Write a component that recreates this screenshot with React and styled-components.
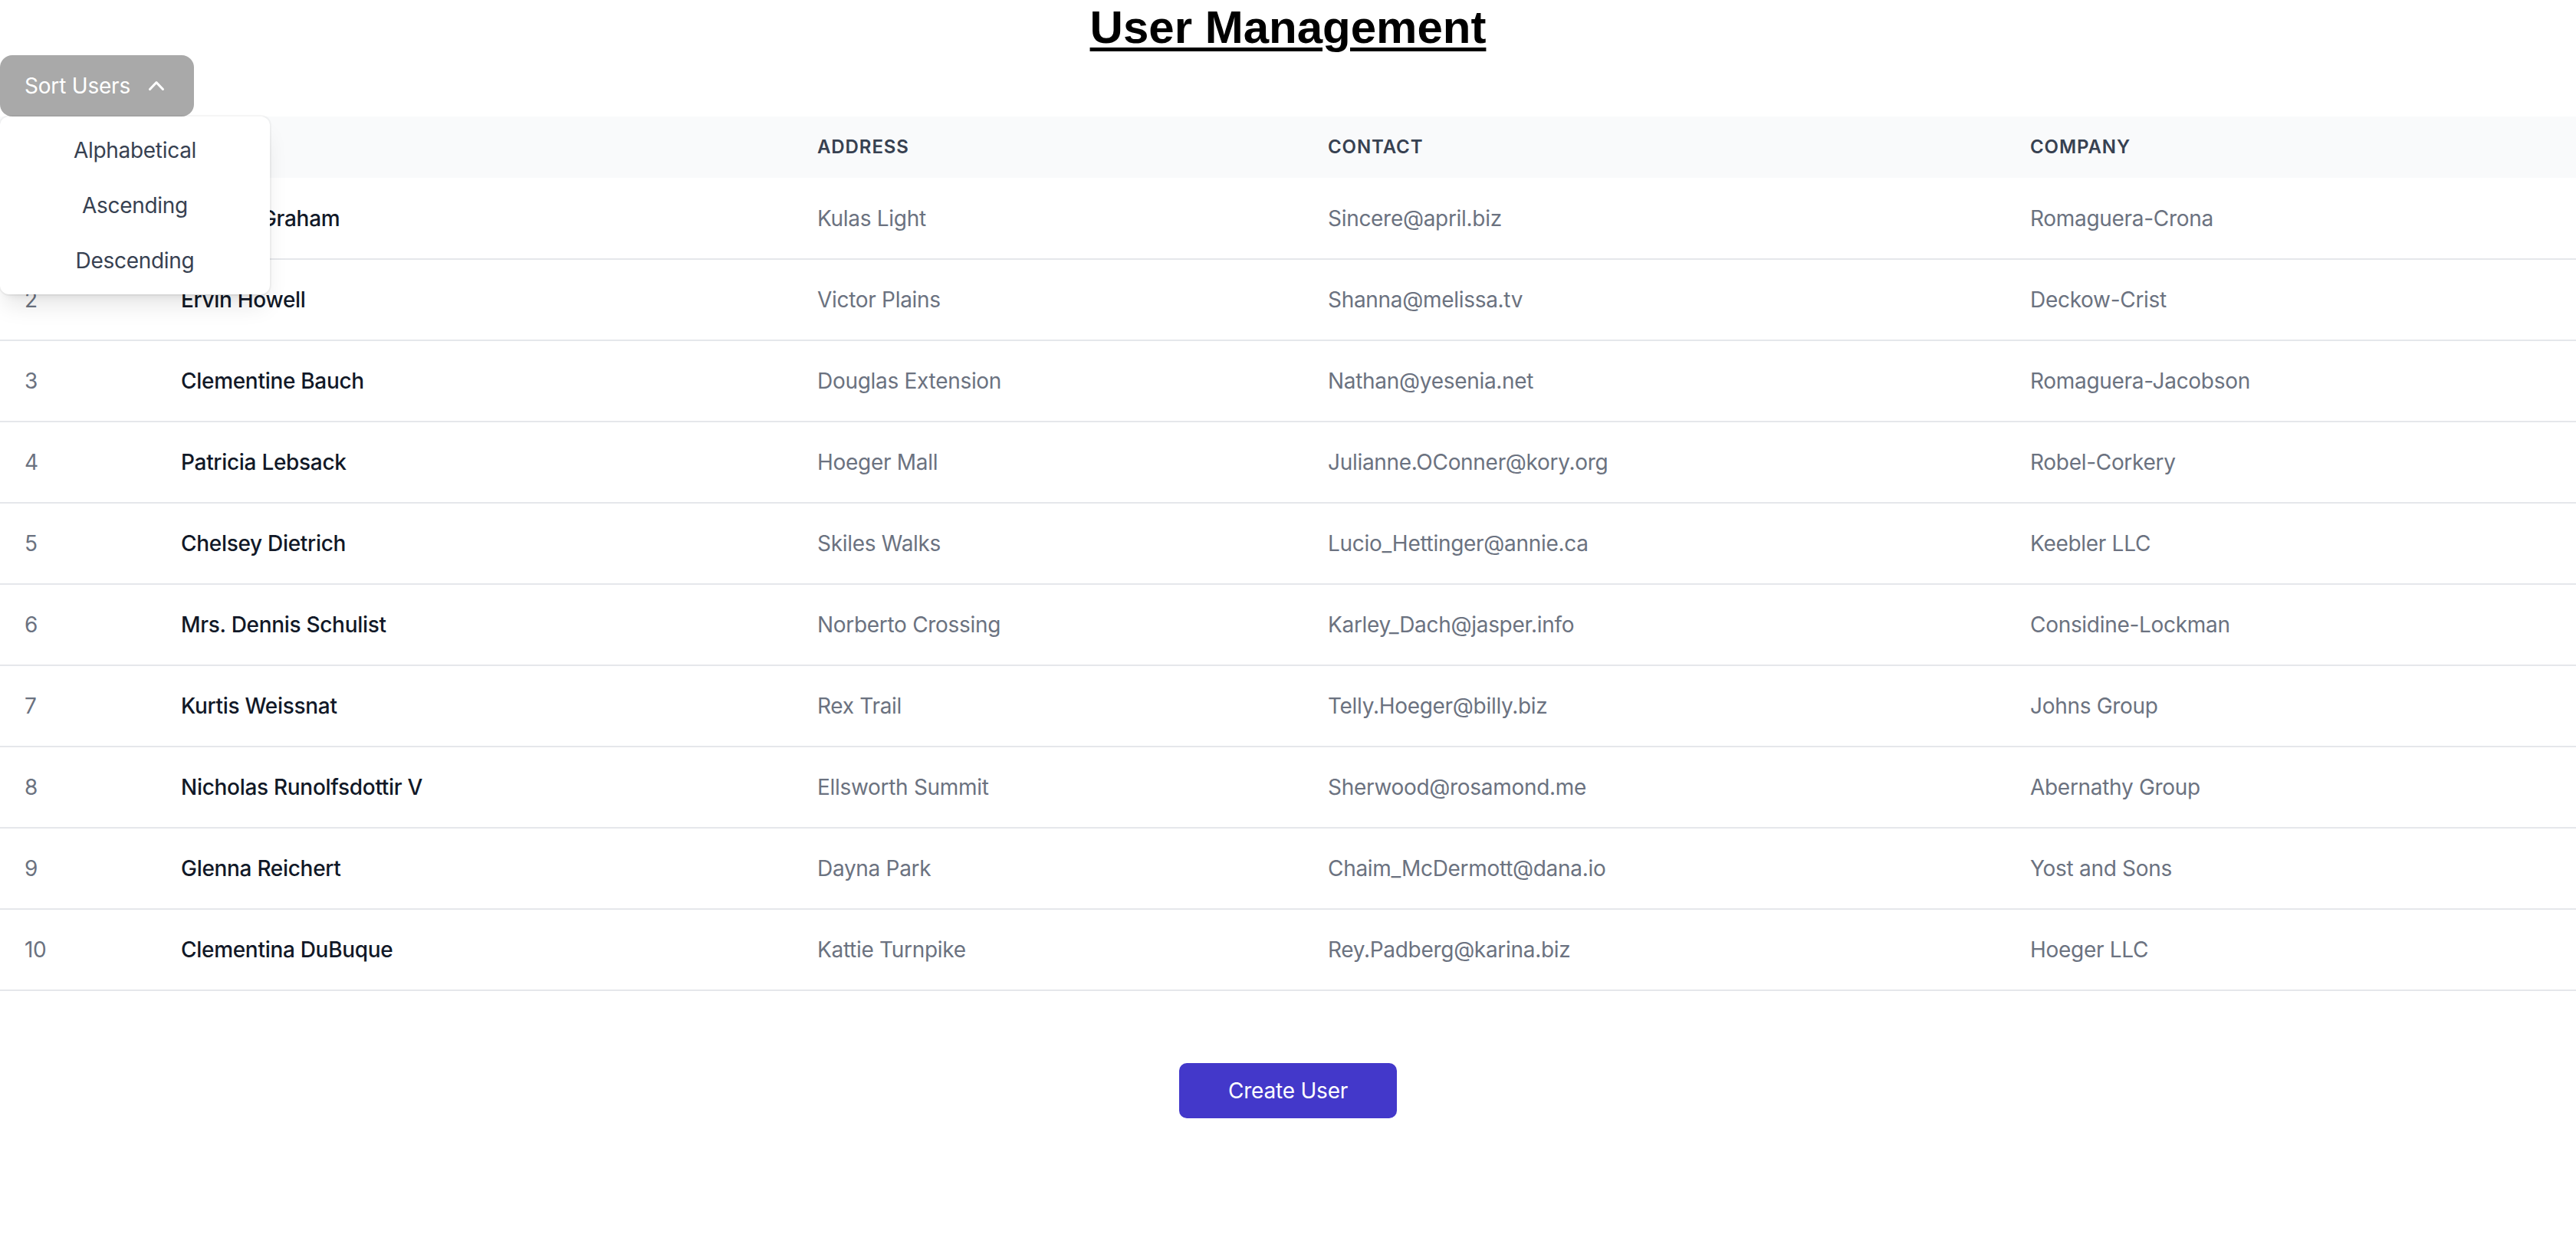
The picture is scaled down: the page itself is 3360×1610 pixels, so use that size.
import React from "react";
import styled, { createGlobalStyle } from "styled-components";

const GlobalStyle = createGlobalStyle`
  html, body {
    margin: 0;
    padding: 0;
    background: #ffffff;
  }
  body {
    font-family: Inter, "Noto Sans", "Liberation Sans", sans-serif;
    -webkit-font-smoothing: antialiased;
  }
  * { box-sizing: border-box; }
`;

const Page = styled.div`
  width: 100%;
  display: flex;
  flex-direction: column;
`;

const Title = styled.h1`
  margin: 0;
  font-family: "Liberation Sans", Arial, sans-serif;
  font-size: 60px;
  line-height: 72px;
  font-weight: 700;
  text-align: center;
  text-decoration: underline;
  text-decoration-thickness: 5px;
  text-underline-offset: 6px;
  color: #000000;
`;

const MenuWrap = styled.div`
  position: relative;
  align-self: flex-start;
  z-index: 10;
`;

const SortButton = styled.button`
  display: inline-flex;
  align-items: center;
  height: 80px;
  width: 253px;
  padding: 0 24px 0 32px;
  border: none;
  border-radius: 16px;
  background: #a9a9a9;
  color: #ffffff;
  font-family: Inter, "Noto Sans", sans-serif;
  font-size: 28px;
  line-height: 40px;
  font-weight: 400;
  letter-spacing: -0.2px;
  cursor: pointer;
`;

const ChevronBox = styled.span`
  display: inline-flex;
  margin-left: 14px;
  width: 40px;
  height: 40px;
  align-items: center;
  justify-content: center;
`;

const Dropdown = styled.ul`
  position: absolute;
  top: 80px;
  left: 0;
  width: 352px;
  margin: 0;
  padding: 8px 0;
  list-style: none;
  background: #ffffff;
  border-radius: 12px;
  box-shadow: 0 0 0 2px rgba(0, 0, 0, 0.04), 0 20px 30px -6px rgba(0, 0, 0, 0.1),
    0 8px 12px -8px rgba(0, 0, 0, 0.1);
`;

const DropdownItem = styled.li`
  height: 72px;
  display: flex;
  align-items: center;
  justify-content: center;
  font-size: 28px;
  line-height: 40px;
  letter-spacing: -0.3px;
  color: #374151;
`;

const Table = styled.table`
  width: 100%;
  border-collapse: collapse;
  table-layout: fixed;
`;

const Col = styled.col`
  width: ${(p) => p.$w};
`;

const HeadRow = styled.tr`
  background: #f9fafb;
`;

const HeadCell = styled.th`
  height: 80px;
  padding: 0 32px;
  text-align: left;
  font-size: 24px;
  line-height: 32px;
  font-weight: 600;
  letter-spacing: 0.9px;
  text-transform: uppercase;
  color: #374151;
`;

const BodyRow = styled.tr`
  border-bottom: 2px solid #e5e7eb;
`;

const Cell = styled.td`
  height: 106px;
  padding: 0 32px;
  font-size: 28px;
  line-height: 40px;
  letter-spacing: -0.3px;
  white-space: nowrap;
  color: ${(p) => (p.$strong ? "#111827" : "#6b7280")};
  font-weight: ${(p) => (p.$strong ? 500 : 400)};
`;

const Footer = styled.div`
  display: flex;
  justify-content: center;
  padding-top: 94px;
`;

const CreateButton = styled.button`
  height: 72px;
  padding: 0 64px;
  border: none;
  border-radius: 10px;
  background: #4338ca;
  color: #ffffff;
  font-family: Inter, "Noto Sans", sans-serif;
  font-size: 28px;
  line-height: 40px;
  font-weight: 400;
  letter-spacing: -0.2px;
  cursor: pointer;
`;

const users = [
  [1, "Leanne Graham", "Kulas Light", "Sincere@april.biz", "Romaguera-Crona"],
  [2, "Ervin Howell", "Victor Plains", "Shanna@melissa.tv", "Deckow-Crist"],
  [3, "Clementine Bauch", "Douglas Extension", "Nathan@yesenia.net", "Romaguera-Jacobson"],
  [4, "Patricia Lebsack", "Hoeger Mall", "Julianne.OConner@kory.org", "Robel-Corkery"],
  [5, "Chelsey Dietrich", "Skiles Walks", "Lucio_Hettinger@annie.ca", "Keebler LLC"],
  [6, "Mrs. Dennis Schulist", "Norberto Crossing", "Karley_Dach@jasper.info", "Considine-Lockman"],
  [7, "Kurtis Weissnat", "Rex Trail", "Telly.Hoeger@billy.biz", "Johns Group"],
  [8, "Nicholas Runolfsdottir V", "Ellsworth Summit", "Sherwood@rosamond.me", "Abernathy Group"],
  [9, "Glenna Reichert", "Dayna Park", "Chaim_McDermott@dana.io", "Yost and Sons"],
  [10, "Clementina DuBuque", "Kattie Turnpike", "Rey.Padberg@karina.biz", "Hoeger LLC"],
];

function ChevronUp() {
  return (
    <svg width="40" height="40" viewBox="0 0 20 20" fill="currentColor" aria-hidden="true">
      <path
        fillRule="evenodd"
        d="M14.77 12.79a.75.75 0 01-1.06-.02L10 8.832 6.29 12.77a.75.75 0 11-1.08-1.04l4.25-4.5a.75.75 0 011.08 0l4.25 4.5a.75.75 0 01-.02 1.06z"
        clipRule="evenodd"
      />
    </svg>
  );
}

export default function App() {
  return (
    <Page>
      <GlobalStyle />
      <Title>User Management</Title>
      <MenuWrap>
        <SortButton>
          Sort Users
          <ChevronBox>
            <ChevronUp />
          </ChevronBox>
        </SortButton>
        <Dropdown>
          <DropdownItem>Alphabetical</DropdownItem>
          <DropdownItem>Ascending</DropdownItem>
          <DropdownItem>Descending</DropdownItem>
        </Dropdown>
      </MenuWrap>
      <Table>
        <colgroup>
          <Col $w="204px" />
          <Col $w="830px" />
          <Col $w="666px" />
          <Col $w="916px" />
          <Col $w="auto" />
        </colgroup>
        <thead>
          <HeadRow>
            <HeadCell>ID</HeadCell>
            <HeadCell>Name</HeadCell>
            <HeadCell>Address</HeadCell>
            <HeadCell>Contact</HeadCell>
            <HeadCell>Company</HeadCell>
          </HeadRow>
        </thead>
        <tbody>
          {users.map(([id, name, address, email, company]) => (
            <BodyRow key={id}>
              <Cell>{id}</Cell>
              <Cell $strong>{name}</Cell>
              <Cell>{address}</Cell>
              <Cell>{email}</Cell>
              <Cell>{company}</Cell>
            </BodyRow>
          ))}
        </tbody>
      </Table>
      <Footer>
        <CreateButton>Create User</CreateButton>
      </Footer>
    </Page>
  );
}
